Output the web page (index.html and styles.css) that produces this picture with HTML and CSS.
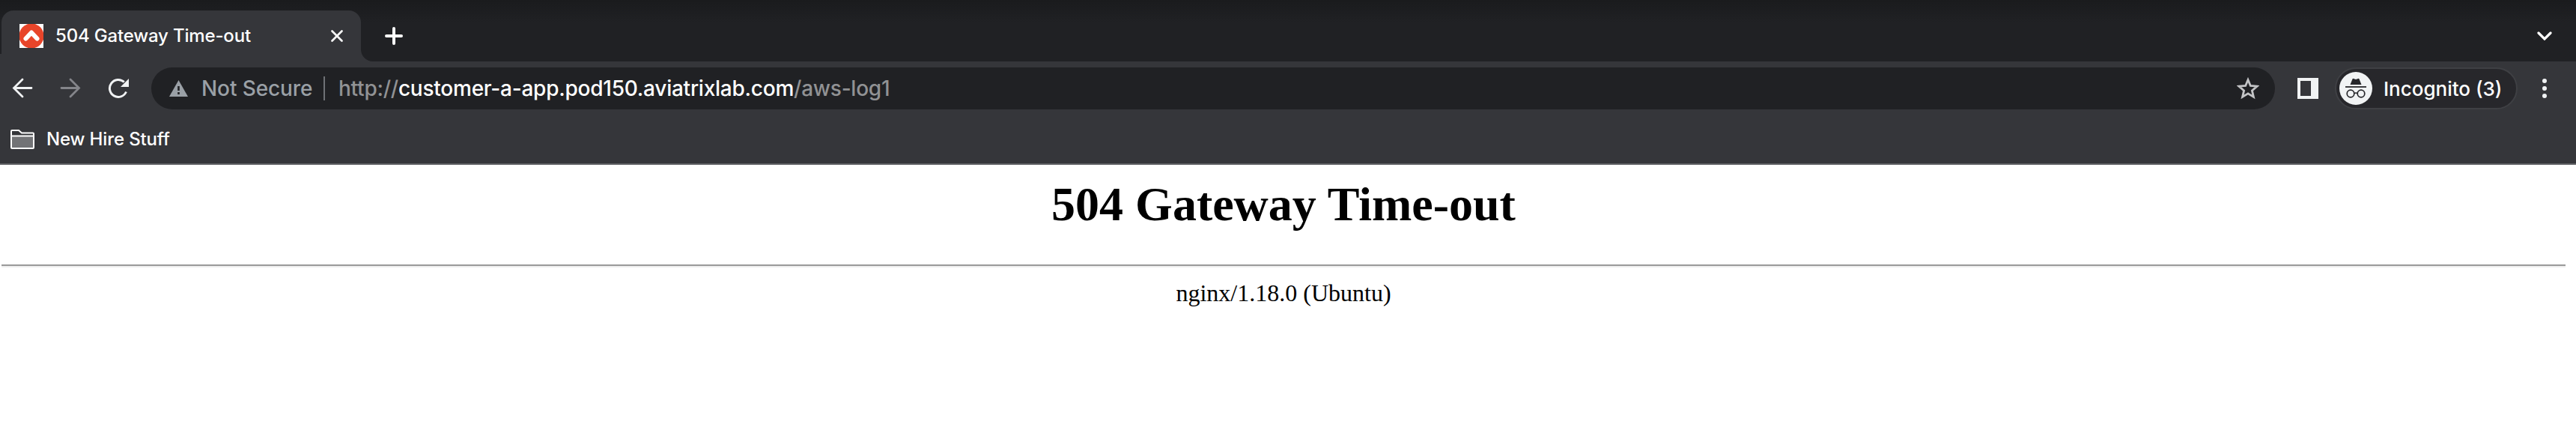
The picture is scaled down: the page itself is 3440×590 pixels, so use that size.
FILE: index.html
```
<!DOCTYPE html>
<html lang="en">
<head>
<meta charset="utf-8">
<title>504 Gateway Time-out</title>
<link rel="stylesheet" href="styles.css">
</head>
<body>
<header class="browser">
  <div class="tabstrip">
    <i class="tab-foot"></i>
    <div class="tab">
      <svg class="favicon" viewBox="0 0 32 32"><rect width="32" height="32" fill="#fff"/><circle cx="16" cy="16" r="16.6" fill="#e8452a"/><path d="M8.500 19.500 16 11.500l7.500 8" fill="none" stroke="#fff" stroke-width="6" stroke-linecap="round" stroke-linejoin="round"/></svg>
      <span class="tab-title">504 Gateway Time-out</span>
      <svg class="close" viewBox="0 0 16 16"><path d="M1.500 1.500l13 13M14.500 1.500l-13 13" fill="none" stroke="#fff" stroke-width="2.600" stroke-linecap="round"/></svg>
    </div>
    <svg class="flare" viewBox="0 0 16 16"><path d="M0 0v16h16A16 16 0 0 1 0 0z" fill="#35363a"/></svg>
    <svg class="plus" viewBox="0 0 24 24"><path d="M12 2v20M2 12h20" stroke="#fff" stroke-width="4" stroke-linecap="round"/></svg>
    <svg class="chevron" viewBox="0 0 20 12"><path d="M2 2l8 8 8-8" fill="none" stroke="#fff" stroke-width="3.200" stroke-linecap="round"/></svg>
  </div>
  <div class="toolbar">
    <div class="nav">
      <svg viewBox="0 0 28 28"><path d="M26 13.500H3M14 2 2.500 13.500 14 25" fill="none" stroke="#f1f3f4" stroke-width="2.800" stroke-linecap="round"/></svg>
      <svg viewBox="0 0 28 28"><path d="M2 13.500h23M14 2l11.500 11.500L14 25" fill="none" stroke="#84858a" stroke-width="2.800" stroke-linecap="round"/></svg>
      <svg viewBox="0 0 28 28"><path d="M24.500 18.500A11.500 11.500 0 1 1 21.800 5.500" fill="none" stroke="#f1f3f4" stroke-width="3"/><path d="M28 1v11H17z" fill="#f1f3f4"/></svg>
    </div>
    <div class="omnibox">
      <svg class="warn" viewBox="0 0 25 22"><path d="M12.500 0 25 22H0z" fill="#9aa0a6"/><path d="M12.500 8v6M12.500 16v3" stroke="#202124" stroke-width="2.600"/></svg>
      <span class="secure">Not Secure</span>
      <i class="divider"></i>
      <span class="url">http://<span class="host">customer-a-app.pod150.aviatrixlab.com</span>/aws-log1</span>
      <svg class="star" viewBox="0 0 30 30"><path d="M15 3.500l3.300 8 8.700.7-6.600 5.700 2 8.500L15 21.900l-7.400 4.500 2-8.500L3 12.200l8.700-.7z" fill="none" stroke="#c3c4c6" stroke-width="2.800"/></svg>
    </div>
    <i class="panel"></i>
    <div class="incognito">
      <svg viewBox="0 0 44 44"><circle cx="22" cy="22" r="22" fill="#f1f3f4"/><path d="M14.500 17 17.500 9.500q.5-1 1.500-.6l3 1 3-1q1-.4 1.500.6L29.500 17z" fill="#27272b"/><path d="M8 20h28" stroke="#27272b" stroke-width="1.800"/><g fill="none" stroke="#27272b" stroke-width="1.700"><circle cx="15" cy="29" r="4.800"/><circle cx="29" cy="29" r="4.800"/><path d="M19.800 28.500q2.200-1 4.400 0"/></g></svg>
      <span>Incognito (3)</span>
    </div>
    <svg class="dots" viewBox="0 0 6 26"><g fill="#f1f3f4"><circle cx="3" cy="3" r="3"/><circle cx="3" cy="13" r="3"/><circle cx="3" cy="23" r="3"/></g></svg>
  </div>
  <div class="bookmarks">
    <svg viewBox="0 0 32 26"><path d="M1 24V2q0-1 1-1h9l4 3.500h15q1 0 1 1V24q0 1-1 1H2q-1 0-1-1z" fill="none" stroke="#fff" stroke-width="2"/><path d="M2 9h28v15H2z" fill="#727376"/><path d="M1 8.500h30" stroke="#fff" stroke-width="2"/></svg>
    <span>New Hire Stuff</span>
  </div>
</header>
<main class="page">
  <h1>504 Gateway Time-out</h1>
  <div class="rule"></div>
  <p class="server">nginx/1.18.0 (Ubuntu)</p>
</main>
</body>
</html>
```
FILE: styles.css
```
* { box-sizing: border-box; }
body { margin: 0; background: #fff; font-family: Inter, "Liberation Sans", sans-serif; font-weight: 500; color: #fff; }
svg { display: block; flex: none; }
span { white-space: nowrap; }
.browser { height: 220px; background: #35363a; border-bottom: 2px solid #5f6064; }
.tabstrip { height: 82px; display: flex; align-items: flex-end; background: linear-gradient(#1a1b1d, #202124 30px); }
.tab-foot { width: 2px; height: 10px; background: #35363a; }
.tab { width: 480px; height: 68px; display: flex; align-items: center; padding: 0 24px; border-radius: 16px 16px 0 0; background: #35363a; }
.favicon { width: 32px; height: 32px; }
.tab-title { flex: 1; margin-left: 16px; padding-bottom: 2px; font-size: 24px; letter-spacing: -0.17px; }
.close { width: 16px; height: 16px; }
.flare { width: 16px; height: 16px; }
.plus { width: 24px; height: 24px; margin: 0 0 22px 16px; }
.chevron { width: 20px; height: 12px; margin: 0 32px 28px auto; }
.toolbar { height: 72px; display: flex; align-items: center; padding: 0 39px 0 16px; }
.nav { display: flex; gap: 36px; width: 186px; }
.nav svg { width: 28px; height: 28px; }
.omnibox { width: 2836px; height: 56px; border-radius: 28px; background: #202124; display: flex; align-items: center; padding: 0 21px 0 24px; font-size: 28px; }
.warn { width: 25px; height: 22px; }
.secure { width: 163px; margin-left: 18px; color: #9aa0a6; letter-spacing: -0.1px; }
.divider { width: 2px; height: 32px; background: #6f7276; }
.url { margin-left: 18px; flex: 1; color: #919294; letter-spacing: -0.24px; }
.host { color: #fff; }
.star { width: 30px; height: 30px; }
.panel { width: 28px; height: 28px; margin-left: 30px; border: solid #f1f3f4; border-width: 4px 10px 4px 4px; }
.incognito { width: 244px; height: 56px; margin-left: 22px; border: 2px solid #3f4044; border-radius: 28px; background: #27272b; display: flex; align-items: center; gap: 15px; padding-left: 4px; font-size: 26px; }
.incognito svg { width: 44px; height: 44px; }
.dots { width: 6px; height: 26px; margin-left: auto; }
.bookmarks { height: 64px; display: flex; align-items: center; gap: 16px; padding-left: 14px; font-size: 24px; letter-spacing: -0.14px; }
.bookmarks svg { width: 32px; height: 26px; }
.bookmarks span { padding-bottom: 2px; }
.page { width: 3424px; margin-left: 2px; color: #000; font-family: "Liberation Serif", serif; font-weight: 400; text-align: center; }
h1 { margin: 0; padding-top: 16px; height: 133px; font-size: 64px; line-height: 74px; }
.rule { height: 4px; border: 1px solid #eee; border-width: 2px 0 2px; border-color: #9a9a9a #eee #eee; }
.server { margin: 16px 0 0; font-size: 32px; line-height: 37px; }
```
